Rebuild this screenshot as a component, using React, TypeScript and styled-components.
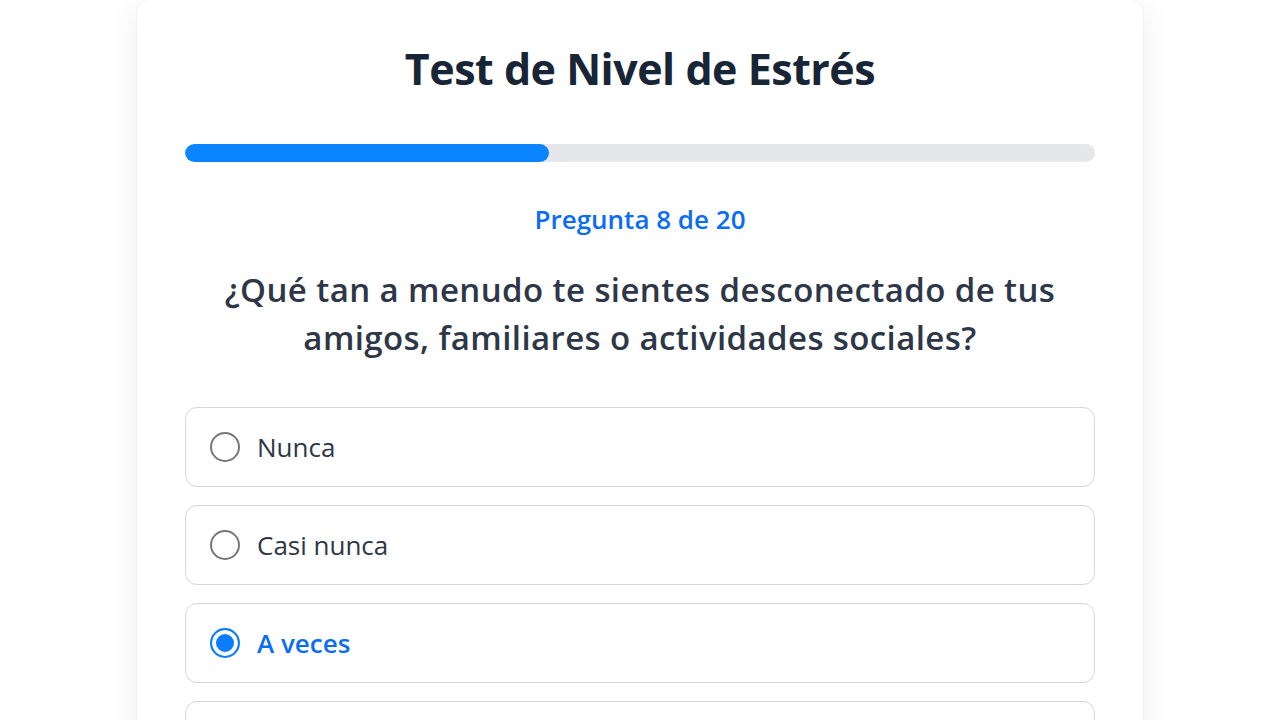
import { createGlobalStyle, styled } from "styled-components";

const options = ["Nunca", "Casi nunca", "A veces", "Frecuentemente", "Muy frecuentemente"];
const current = 8;
const total = 20;
const selected = 2;

const GlobalStyle = createGlobalStyle`
    html, body {
        margin: 0;
        padding: 0;
        background: #ffffff;
        font-family: "Open Sans", "Noto Sans", sans-serif;
    }
`;

export default function App() {
    const progress = (current / total) * 100;

    return (
        <Page>
            <GlobalStyle />
            <Card>
                <Title>Test de Nivel de Estrés</Title>
                <ProgressTrack>
                    <ProgressFill style={{ width: `${progress}%` }} />
                </ProgressTrack>
                <Counter>Pregunta {current} de {total}</Counter>
                <Question>
                    ¿Qué tan a menudo te sientes desconectado de tus amigos, familiares o actividades sociales?
                </Question>
                <OptionList>
                    {options.map((label, i) => (
                        <Option key={label}>
                            <Radio $active={i === selected} />
                            <OptionLabel $active={i === selected}>{label}</OptionLabel>
                        </Option>
                    ))}
                </OptionList>
            </Card>
        </Page>
    );
}

const Page = styled.div`
    display: flex;
    justify-content: center;
    height: 100vh;
    overflow: hidden;
`;

const Card = styled.div`
    box-sizing: border-box;
    flex: none;
    align-self: flex-start;
    width: 1006px;
    padding: 41px 48px 48px;
    background: #ffffff;
    border-radius: 12px;
    box-shadow: 0 0 0 1px rgba(0, 0, 0, 0.03), 0 8px 32px rgba(0, 0, 0, 0.07);
    display: flex;
    flex-direction: column;
`;

const Title = styled.h1`
    margin: 0;
    text-align: center;
    font-size: 43px;
    line-height: 55px;
    letter-spacing: -0.5px;
    font-weight: 700;
    color: #172536;
`;

const ProgressTrack = styled.div`
    margin-top: 48px;
    height: 18px;
    border-radius: 9px;
    background: #e5e7eb;
    overflow: hidden;
`;

const ProgressFill = styled.div`
    height: 100%;
    border-radius: 9px;
    background: #0a84ff;
`;

const Counter = styled.div`
    margin-top: 39px;
    text-align: center;
    font-size: 26px;
    line-height: 36px;
    font-weight: 600;
    color: #0b6cf4;
`;

const Question = styled.h2`
    margin: 29px auto 0;
    max-width: 880px;
    text-align: center;
    font-size: 33px;
    line-height: 48px;
    letter-spacing: 0.4px;
    font-weight: 600;
    color: #2d3748;
`;

const OptionList = styled.div`
    margin-top: 45px;
    display: flex;
    flex-direction: column;
    gap: 18px;
`;

const Option = styled.label`
    box-sizing: border-box;
    height: 80px;
    padding: 0 24px;
    display: flex;
    align-items: center;
    gap: 17px;
    border: 1px solid #d3d7de;
    border-radius: 12px;
    background: #ffffff;
    cursor: pointer;
`;

const Radio = styled.span<{ $active: boolean }>`
    box-sizing: border-box;
    flex: none;
    width: 30px;
    height: 30px;
    border-radius: 50%;
    border: 2px solid ${(p) => (p.$active ? "#0a7cff" : "#777777")};
    background: ${(p) => (p.$active ? "#0a7cff" : "#ffffff")};
    box-shadow: ${(p) => (p.$active ? "inset 0 0 0 4px #ffffff" : "none")};
`;

const OptionLabel = styled.span<{ $active: boolean }>`
    font-size: 26px;
    font-weight: ${(p) => (p.$active ? 600 : 400)};
    color: ${(p) => (p.$active ? "#0b6cf4" : "#2d3748")};
`;
